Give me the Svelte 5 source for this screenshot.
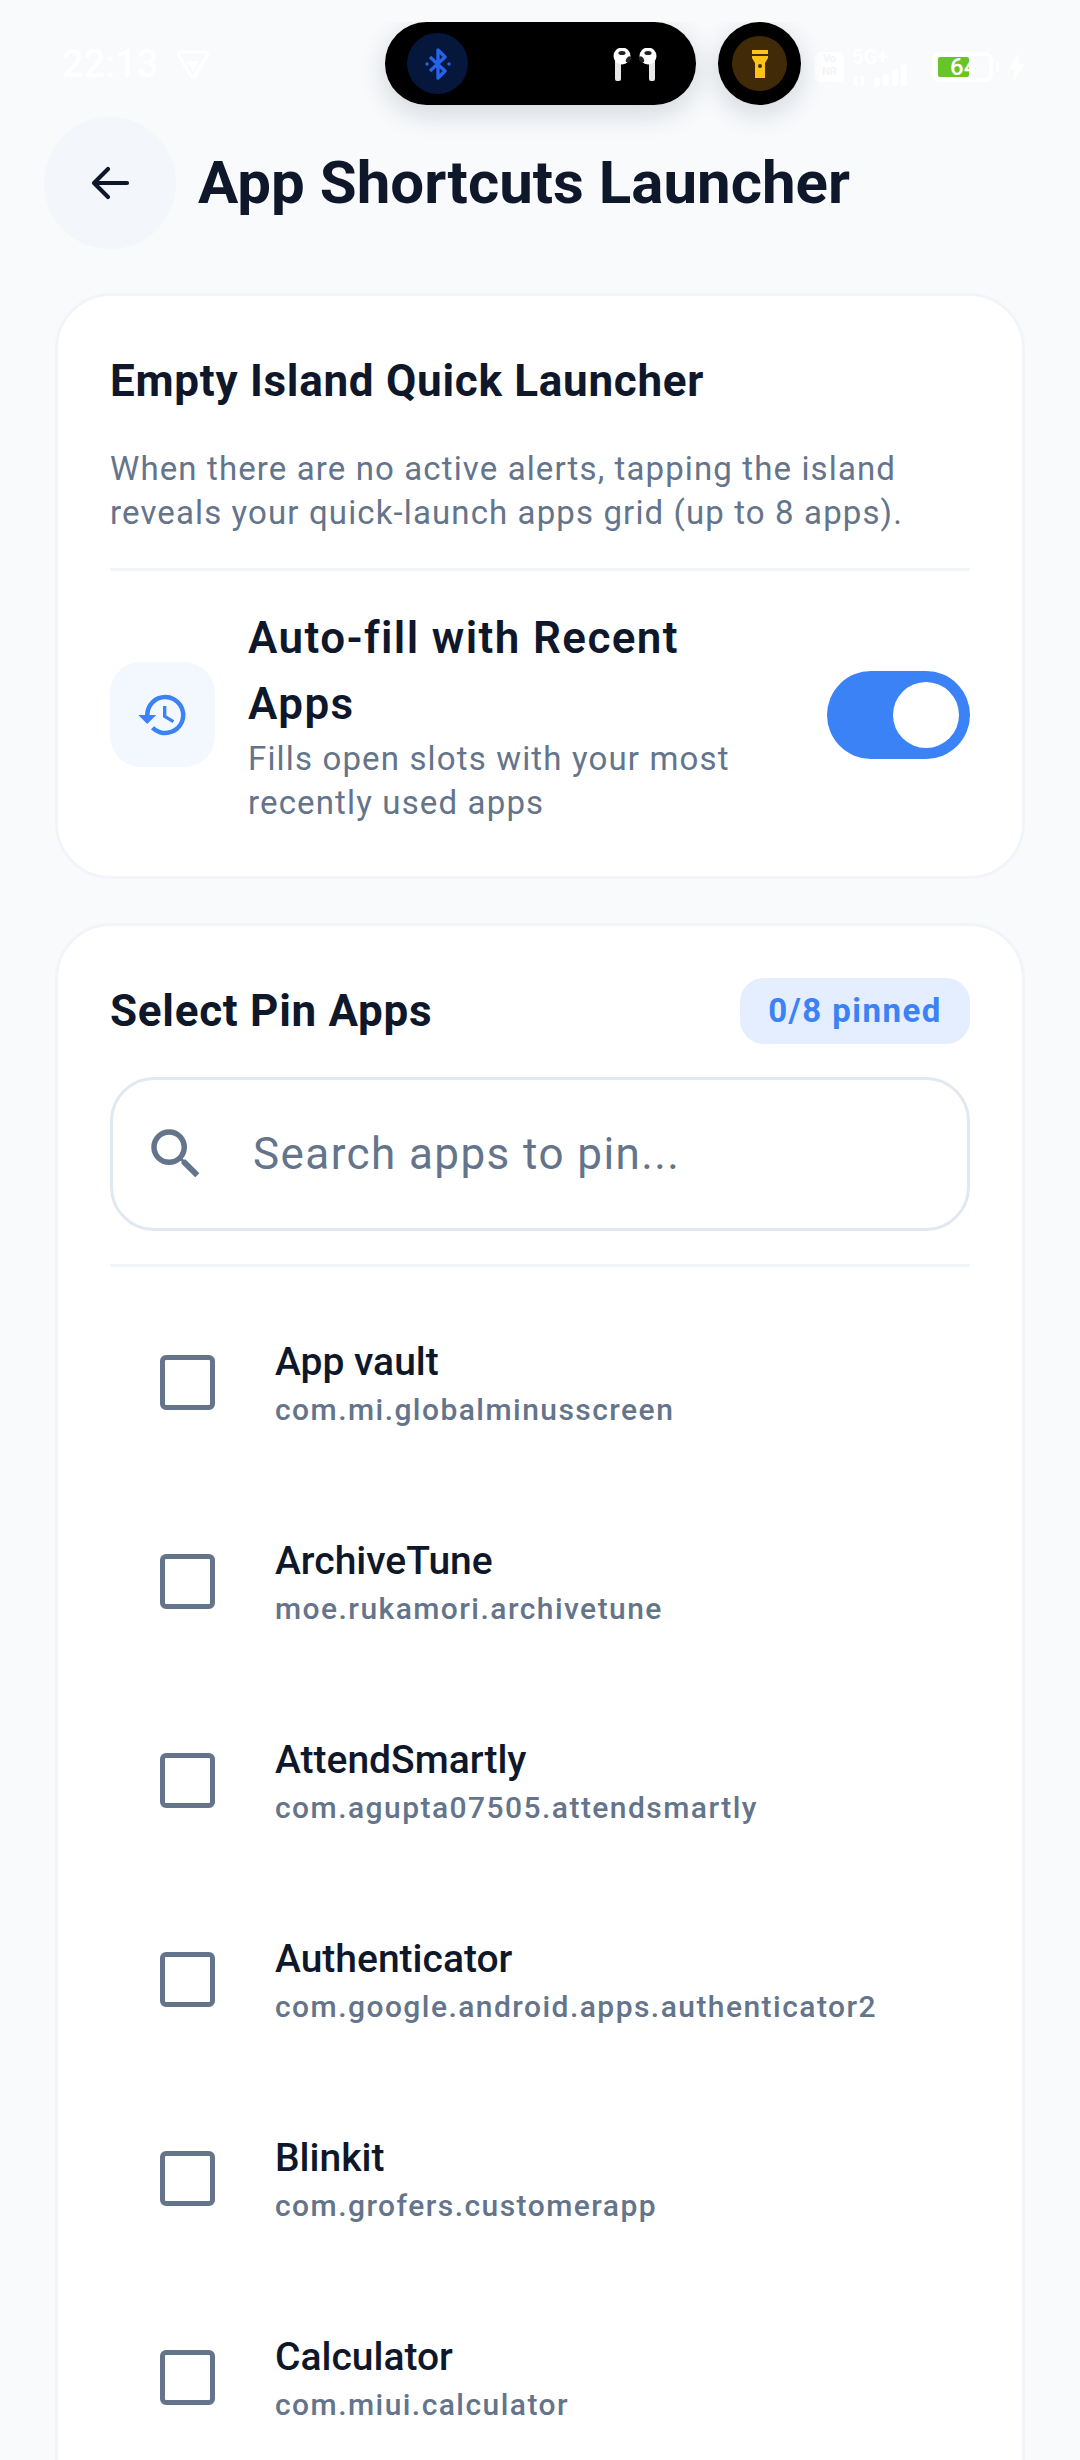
<script>
  const apps = [
    ['App vault', 'com.mi.globalminusscreen'],
    ['ArchiveTune', 'moe.rukamori.archivetune'],
    ['AttendSmartly', 'com.agupta07505.attendsmartly'],
    ['Authenticator', 'com.google.android.apps.authenticator2'],
    ['Blinkit', 'com.grofers.customerapp'],
    ['Calculator', 'com.miui.calculator']
  ];
</script>

<div class="page">
  <div class="status">
    <div class="status-left">
      <span class="time">22:13</span>
      <svg width="32" height="30" viewBox="0 0 32 30" fill="none" stroke="#fff" stroke-width="3" stroke-linejoin="round"><path d="M4 3h24c2 0 3 2 2 4L18 27c-1 2-3 2-4 0L2 7C1 5 2 3 4 3z"/><path d="M10 12h12l-6 10z" fill="#fff" stroke="none"/></svg>
    </div>
    <div class="status-right">
      <span class="vonr">Vo<br />NR</span>
      <span class="signal">
        <span class="fiveg">5G+</span>
        <svg width="62" height="22" viewBox="0 0 62 22" fill="#fff"><rect x="22" y="14" width="6" height="8" rx="2"/><rect x="31" y="10" width="6" height="12" rx="2"/><rect x="40" y="5" width="6" height="17" rx="2"/><rect x="49" y="0" width="6" height="22" rx="2"/><rect x="2" y="12" width="3" height="10"/><rect x="9" y="12" width="3" height="10"/></svg>
      </span>
      <span class="battery"><span class="battery-fill"></span><span class="battery-num">64</span></span>
      <span class="battery-cap"></span>
      <svg width="18" height="28" viewBox="0 0 18 28" fill="#fff"><path d="M11 0 1 16h6L5 28l12-17h-7z"/></svg>
    </div>
  </div>

  <div class="island-clip">
    <div class="pill">
      <span class="bt">
        <svg width="28" height="32" viewBox="0 0 28 32" fill="none" stroke="#2563eb" stroke-width="3.4" stroke-linejoin="round"><path d="M6 9l15 14-7 7V2l7 7L6 23"/><circle cx="3" cy="16" r="1.7" fill="#2563eb" stroke="none"/><circle cx="25" cy="16" r="1.7" fill="#2563eb" stroke="none"/></svg>
      </span>
      <svg class="buds" width="44" height="33" viewBox="0 0 44 33">
        <rect x="2" y="8" width="6" height="25" rx="2" fill="#e8e8e8"/>
        <circle cx="9" cy="8" r="8.5" fill="#fff"/>
        <ellipse cx="9" cy="5" rx="3.6" ry="2" fill="#222"/>
        <ellipse cx="15.5" cy="11.5" rx="2.2" ry="3.4" transform="rotate(35 15.5 11.5)" fill="#222"/>
        <rect x="36" y="8" width="6" height="25" rx="2" fill="#e8e8e8"/>
        <circle cx="35" cy="8" r="8.5" fill="#fff"/>
        <ellipse cx="35" cy="5" rx="3.6" ry="2" fill="#222"/>
        <ellipse cx="28.5" cy="11.5" rx="2.2" ry="3.4" transform="rotate(-35 28.5 11.5)" fill="#222"/>
      </svg>
    </div>
    <div class="circle">
      <span class="torch">
        <svg width="18" height="28" viewBox="0 0 18 28" fill="#fcc419"><path d="M1 0h16v4H1z"/><path d="M1 6h16v2l-3 5v15H4V13L1 8z"/><circle cx="9" cy="16" r="2" fill="#412a07"/></svg>
      </span>
    </div>
  </div>

  <header class="header">
    <button class="back" aria-label="Back">
      <svg width="48" height="48" viewBox="0 0 24 24" fill="none" stroke="#0f172a" stroke-width="2.1" stroke-linecap="round" stroke-linejoin="round"><path d="M20.5 12H4.5M11 5l-7 7 7 7"/></svg>
    </button>
    <h1>App Shortcuts Launcher</h1>
  </header>

  <section class="card first">
    <h2>Empty Island Quick Launcher</h2>
    <p class="desc">When there are no active alerts, tapping the island reveals your quick-launch apps grid (up to 8 apps).</p>
    <div class="divider"></div>
    <div class="auto">
      <span class="auto-icon">
        <svg width="54" height="54" viewBox="0 0 24 24" fill="#3b82f6"><path d="M13 3a9 9 0 0 0-9 9H1l3.89 3.89.07.14L9 12H6a7 7 0 1 1 2.05 4.95l-1.42 1.42A9 9 0 1 0 13 3zm-1 5v5l4.28 2.54.72-1.21-3.5-2.08V8z"/></svg>
      </span>
      <div class="auto-text">
        <div class="auto-title">Auto-fill with Recent Apps</div>
        <div class="auto-sub">Fills open slots with your most recently used apps</div>
      </div>
      <span class="toggle"><span class="thumb"></span></span>
    </div>
  </section>

  <section class="card second">
    <div class="pin-head">
      <h2>Select Pin Apps</h2>
      <span class="badge">0/8 pinned</span>
    </div>
    <div class="search">
      <svg width="66" height="66" viewBox="0 0 24 24" fill="#64748b"><path d="M15.5 14h-.79l-.28-.27A6.47 6.47 0 0 0 16 9.5 6.5 6.5 0 1 0 9.5 16c1.61 0 3.09-.59 4.23-1.57l.27.28v.79l5 4.99L20.49 19l-4.99-5zm-6 0C7.01 14 5 11.99 5 9.5S7.01 5 9.5 5 14 7.01 14 9.5 11.99 14 9.5 14z"/></svg>
      <span class="placeholder">Search apps to pin...</span>
    </div>
    <div class="divider list-divider"></div>
    <ul class="list">
      {#each apps as [name, pkg]}
        <li class="row">
          <span class="check"></span>
          <div class="row-text">
            <div class="name">{name}</div>
            <div class="pkg">{pkg}</div>
          </div>
        </li>
      {/each}
    </ul>
  </section>
</div>

<style>
  :global(body) { margin: 0; background: #f8fafc; }
  .page {
    position: relative;
    width: 1080px;
    height: 2460px;
    overflow: hidden;
    background: #f8fafc;
    font-family: Roboto, "Noto Sans", sans-serif;
    color: #0f172a;
  }
  .status {
    position: absolute; inset: 0 0 auto 0; height: 128px;
    color: #fff;
  }
  .status-left { position: absolute; left: 62px; top: 42px; display: flex; align-items: center; gap: 19px; }
  .time { font-size: 38px; font-weight: 500; line-height: 44px; }
  .status-right { position: absolute; left: 815px; top: 48px; display: flex; align-items: center; }
  .vonr { width: 29px; height: 30px; background: #fff; border-radius: 5px; color: #f1f5f9; font-size: 11px; line-height: 13px; text-align: center; font-weight: 700; }
  .signal { display: flex; flex-direction: column; margin-left: 8px; width: 64px; }
  .fiveg { font-size: 20px; font-weight: 700; line-height: 18px; height: 16px; }
  .battery { position: relative; width: 61px; height: 30px; margin-left: 16px; border: 4px solid #fff; border-radius: 8px; box-sizing: border-box; }
  .battery-fill { position: absolute; left: 2px; top: 1px; width: 31px; height: 20px; background: #69c42a; border-radius: 2px; }
  .battery-num { position: absolute; left: 14px; top: -1px; font-size: 24px; line-height: 24px; font-weight: 500; }
  .battery-cap { width: 3px; height: 10px; background: #fff; margin: 0 9px 0 3px; }

  .island-clip {
    position: absolute; left: 300px; top: 22px; width: 560px; height: 130px;
    overflow: hidden; display: flex; align-items: flex-start; padding-left: 85px; box-sizing: border-box; gap: 22px;
  }
  .pill, .circle { height: 83px; background: #000; border-radius: 42px; box-shadow: 0 8px 28px rgba(15, 23, 42, 0.16); flex: none; box-sizing: border-box; display: flex; align-items: center; }
  .pill { width: 311px; padding: 0 39px 0 22px; justify-content: space-between; }
  .circle { width: 83px; justify-content: center; }
  .bt { width: 61px; height: 61px; border-radius: 50%; background: #05173a; display: flex; align-items: center; justify-content: center; }
  .torch { width: 55px; height: 55px; border-radius: 50%; background: #412a07; display: flex; align-items: center; justify-content: center; }
  .buds { margin-top: 1px; }

  .header { display: flex; align-items: center; gap: 22px; padding: 117px 0 0 44px; }
  .back { width: 132px; height: 132px; border: 0; border-radius: 50%; background: #f3f6fa; display: flex; align-items: center; justify-content: center; padding: 0; }
  h1 { margin: 0; font-size: 60px; font-weight: 700; line-height: 70px; }

  .card { margin: 0 55px; background: #fff; border: 3px solid #f1f5f9; border-radius: 56px; box-sizing: border-box; padding: 0 52px; }
  .first { margin-top: 44px; height: 586px; }
  .second { margin-top: 44px; height: 1700px; }
  h2 { margin: 0; font-size: 44px; font-weight: 700; line-height: 56px; letter-spacing: 0.72px; }
  .first h2 { padding-top: 57px; }
  .desc { margin: 38px 0 0; font-size: 33px; line-height: 44px; color: #64748b; letter-spacing: 1.12px; }
  .divider { height: 3px; background: #f1f5f9; }
  .first .divider { margin-top: 33px; }
  .auto { display: flex; align-items: center; height: 287px; }
  .auto-icon { width: 105px; height: 105px; border-radius: 31px; background: #f3f8ff; display: flex; align-items: center; justify-content: center; flex: none; }
  .auto-text { width: 520px; margin-left: 33px; flex: none; }
  .auto-title { font-size: 44px; line-height: 66px; font-weight: 600; letter-spacing: 1.4px; }
  .auto-sub { font-size: 33px; line-height: 44px; color: #64748b; letter-spacing: 1.15px; }
  .toggle { width: 143px; height: 88px; background: #3b82f6; border-radius: 44px; margin-left: auto; display: flex; align-items: center; justify-content: flex-end; padding-right: 11px; box-sizing: border-box; flex: none; }
  .thumb { width: 66px; height: 66px; border-radius: 50%; background: #fff; }

  .pin-head { display: flex; align-items: center; justify-content: space-between; padding-top: 52px; }
  .badge { width: 230px; height: 66px; background: #e4eefe; border-radius: 24px; color: #3b82f6; font-size: 33px; font-weight: 700; line-height: 66px; text-align: center; letter-spacing: 1.47px; }
  .search { height: 154px; margin-top: 33px; border: 3px solid #e2e8f0; border-radius: 44px; box-sizing: border-box; display: flex; align-items: center; padding-left: 30px; }
  .placeholder { font-size: 44px; color: #64748b; margin-left: 44px; letter-spacing: 1.42px; }
  .list-divider { margin-top: 33px; }
  .list { list-style: none; margin: 0; padding: 16px 0 0; }
  .row { height: 199px; display: flex; align-items: center; padding-left: 50px; box-sizing: border-box; }
  .check { width: 55px; height: 55px; border: 5px solid #64748b; border-radius: 6px; box-sizing: border-box; flex: none; margin-right: 60px; }
  .row-text { padding-top: 4px; }
  .name { font-size: 39px; font-weight: 500; line-height: 50px; }
  .pkg { font-size: 30px; line-height: 44px; margin-top: 1.5px; color: #64748b; letter-spacing: 1.45px; font-weight: 500; }
</style>
